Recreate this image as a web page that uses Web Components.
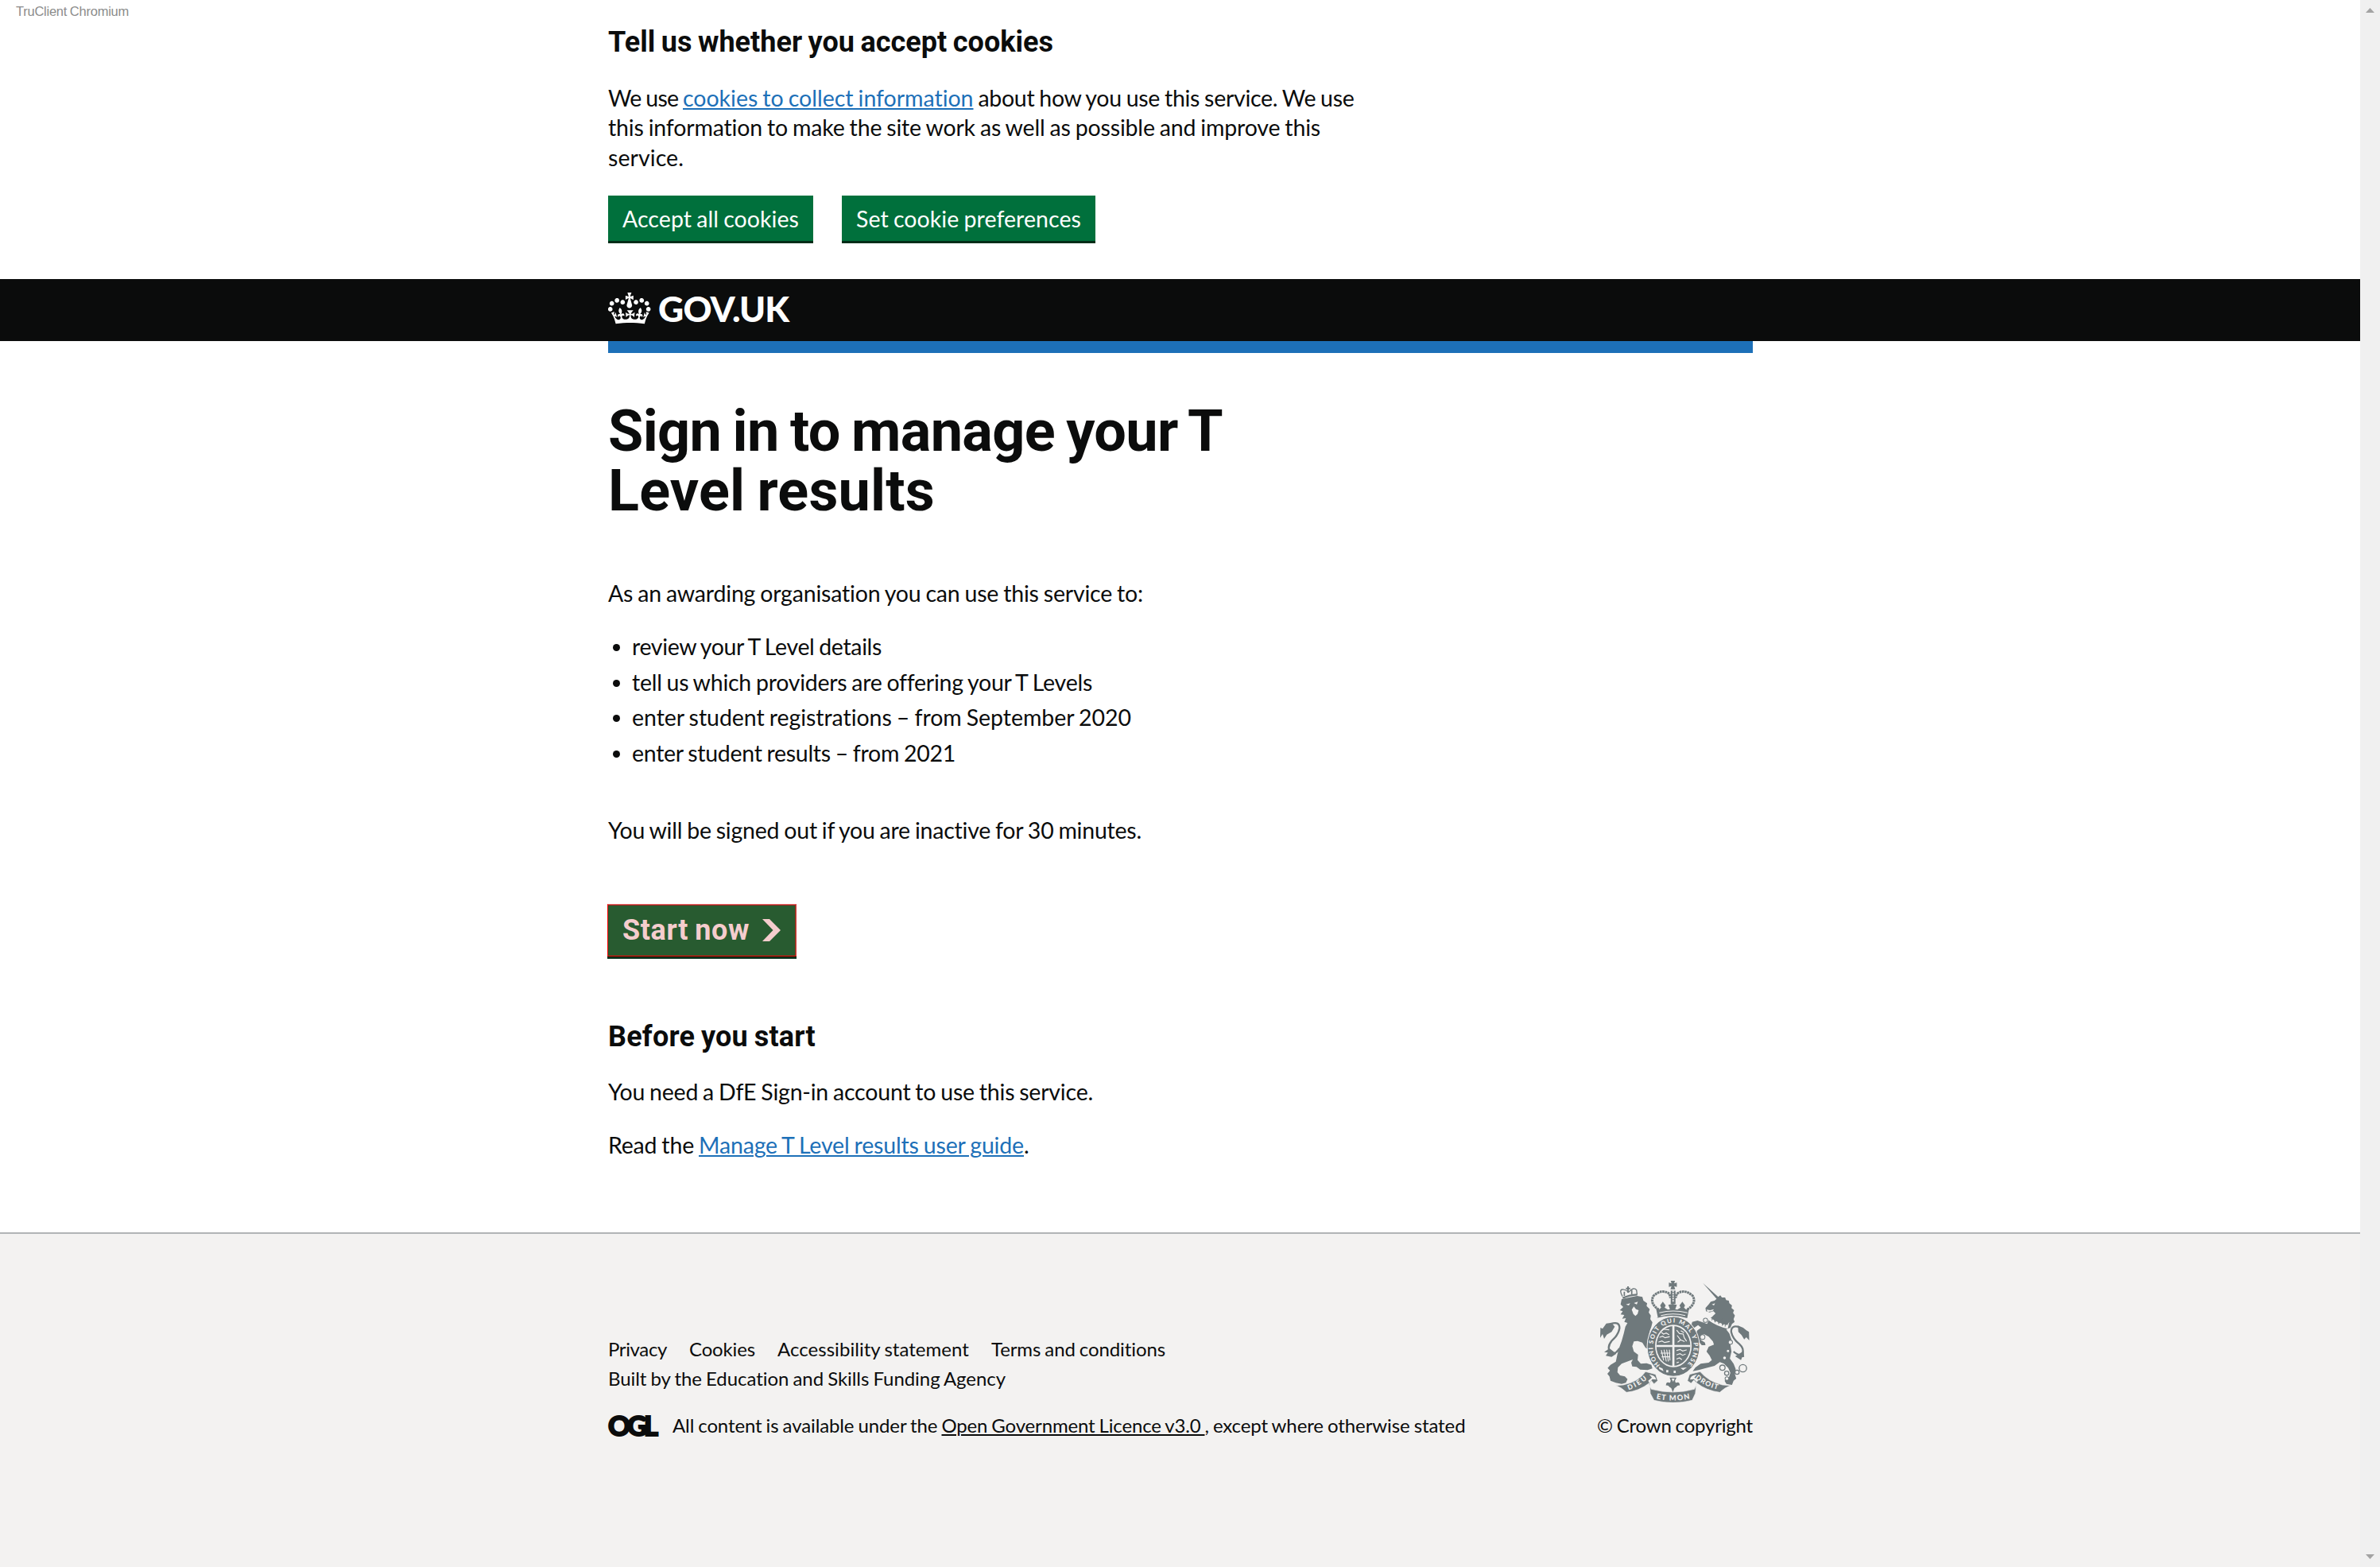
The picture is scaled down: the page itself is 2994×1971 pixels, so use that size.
<!DOCTYPE html>
<html lang="en">
<head>
<meta charset="utf-8">
<title>Manage T Level results</title>
<style>
html, body { margin: 0; padding: 0; background: #fff; }
body { width: 2994px; height: 1971px; overflow: hidden; font-family: Lato, "Open Sans", sans-serif; color: #0b0c0c; }
</style>
</head>
<body>
<service-page></service-page>
<script>
const define = (name, html, extra) => {
  const tpl = document.createElement('template');
  tpl.innerHTML = html;
  customElements.define(name, class extends HTMLElement {
    connectedCallback() {
      if (this.shadowRoot) return;
      this.attachShadow({ mode: 'open' }).append(document.importNode(tpl.content, true));
      if (extra) extra(this);
    }
  });
};

/* A run of text tracked to the measure given in its w attribute */
define('text-run', `<style>:host{white-space:pre;word-spacing:-.04em;font-variant-ligatures:none}</style><slot></slot>`, el => {
  const w = +el.getAttribute('w');
  if (!w) return;
  const natural = el.getBoundingClientRect().width;
  el.style.letterSpacing = ((w - natural) / el.textContent.length).toFixed(3) + 'px';
});

define('body-text', `<style>
:host{display:block;font-size:28.5px;line-height:37.5px}
</style><slot></slot>`);

define('heading-m', `<style>
:host{display:block;font:700 36px/45px Roboto,Lato,sans-serif}
</style><slot></slot>`);

define('text-link', `<style>
:host{color:#1d70b8;text-decoration:underline;text-decoration-thickness:2px;text-underline-offset:2px}
:host([plain]){color:#0b0c0c}
</style><slot></slot>`);

define('action-button', `<style>
:host{display:flex;align-items:center;box-sizing:border-box;height:57px;padding:0 18px;background:#00703c;color:#fff;box-shadow:0 3px 0 #002d18;font-size:28.5px;line-height:30px}
</style><slot></slot>`);

define('start-button', `<style>
:host{display:flex;align-items:center;box-sizing:border-box;width:238px;height:66px;margin-left:-1px;padding:0 19px 0 18px;background:#285b30;color:#f5cdcd;
border:1px solid #f00;border-top-color:#e46a6a;border-right-color:#cf3d3d;box-shadow:inset 0 1px 0 #a3231c,inset -1px 0 0 #8a3a22,0 3px 0 #002d18;font:700 36px/36px Roboto,Lato,sans-serif;justify-content:space-between}
svg{display:block;width:23px;height:28px}
</style><slot></slot><svg viewBox="0 0 23 28"><path d="M0 0h9l14 14-14 14H0l13.5-14z" fill="#f5cdcd"/></svg>`);

define('cookie-banner', `<style>
:host{display:block;box-sizing:border-box;height:351px;padding:31px 0 0 765px}
heading-m{margin-bottom:28.5px}
.row{display:flex;gap:36px;margin-top:29px}
</style>
<heading-m><text-run w="560">Tell us whether you accept cookies</text-run></heading-m>
<body-text><div><text-run w="94">We use </text-run><text-link><text-run w="365.5">cookies to collect information</text-run></text-link><text-run w="479"> about how you use this service. We use</text-run></div>
<div><text-run w="896">this information to make the site work as well as possible and improve this</text-run></div>
<div><text-run w="95">service.</text-run></div></body-text>
<div class="row"><action-button><text-run w="222">Accept all cookies</text-run></action-button><action-button><text-run w="283">Set cookie preferences</text-run></action-button></div>`);

define('crown-logo', `<style>:host{display:block}svg{display:block;width:54px;height:40px;overflow:visible}</style>
<svg viewBox="0 4 36 26.4" preserveAspectRatio="none" fill="#fff" fill-rule="evenodd"><path d="M6.7 12.2c1 .4 2.1-.1 2.5-1s-.1-2.1-1-2.5c-1-.4-2.1.1-2.5 1-.4 1 0 2.1 1 2.5m-4.3 2.5c1 .4 2.1-.1 2.5-1s-.1-2.1-1-2.5c-1-.4-2.1.1-2.5 1-.5 1 0 2.1 1 2.5m-1.3 4.8c1 .4 2.1-.1 2.5-1 .4-1-.1-2.1-1-2.5-1-.4-2.1.1-2.5 1-.4 1 0 2.1 1 2.5m10.4-5.8c1 .4 2.1-.1 2.5-1s-.1-2.1-1-2.5c-1-.4-2.1.1-2.5 1s0 2.1 1 2.5m17.4-1.5c-1 .4-2.1-.1-2.5-1s.1-2.1 1-2.5c1-.4 2.1.1 2.5 1 .5 1 0 2.1-1 2.5m4.3 2.5c-1 .4-2.1-.1-2.5-1s.1-2.1 1-2.5c1-.4 2.1.1 2.5 1 .5 1 0 2.1-1 2.5m1.3 4.8c-1 .4-2.1-.1-2.5-1-.4-1 .1-2.1 1-2.5 1-.4 2.1.1 2.5 1 .4 1 0 2.1-1 2.5m-10.4-5.8c-1 .4-2.1-.1-2.5-1s.1-2.1 1-2.5c1-.4 2.1.1 2.5 1s0 2.1-1 2.5m-5.3-4.9 2.4 1.3V6.5l-2.4.8c-.1-.1-.1-.2-.2-.3s1-3 1-3h-3.4l1 3c-.1.1-.2.2-.2.3-.1.1-2.4-.8-2.4-.8V10l2.4-1.3c.1.1.1.2.2.3l-1.5 5c-.1.2-.1.4-.1.6 0 1.1.8 2 1.9 2.2h.7c1.1-.2 1.9-1.1 1.9-2.1 0-.2 0-.4-.1-.6l-1.4-5c.1-.2.1-.3.2-.4m-1 20.3c4.6 0 8.9.3 12.8.9 1.1-4.6 2.4-7.2 3.8-9.1l-2.6-.9c.3 1.3.3 1.9 0 2.8-.4-.4-.8-1.2-1.1-2.4l-1.2 4.2c.8-.5 1.4-.9 2-.9-1.1 2.5-2.6 3.1-3.5 3-1.1-.2-1.7-1.2-1.5-2.1.3-1.2 1.5-1.5 2.1-.1 1.1-2.3-.8-3-2-2.3 1.9-1.9 2.1-3.5.6-5.6-2.1 1.6-2.1 3.2-1.2 5.5-1.2-1.4-3.2-.6-2.5 1.6.9-1.4 2.1-.5 1.9.8-.2 1.1-1.7 2.1-3.5 1.9-2.7-.2-2.9-2.1-2.9-3.6.7-.1 1.9.5 2.9 1.9l.4-4.3c-1.1 1.1-2.1 1.4-3.2 1.4.4-1.2 2.1-3 2.1-3h-5.4s1.7 1.9 2.1 3c-1.1 0-2.1-.2-3.2-1.4l.4 4.3c1-1.4 2.2-2 2.9-1.9-.1 1.5-.2 3.4-2.9 3.6-1.9.2-3.4-.8-3.5-1.9-.2-1.3 1-2.2 1.9-.8.7-2.3-1.2-3-2.5-1.6.9-2.2.9-3.9-1.2-5.5-1.5 2-1.3 3.7.6 5.6-1.2-.7-3.1 0-2 2.3.6-1.4 1.8-1.1 2.1.1.2.9-.3 1.9-1.5 2.1-.9.2-2.4-.5-3.5-3 .6 0 1.2.3 2 .9l-1.2-4.2c-.3 1.1-.7 1.9-1.1 2.4-.3-.8-.2-1.4 0-2.8l-2.6.9c1.4 1.9 2.7 4.5 3.8 9.1 3.9-.6 8.2-.9 12.8-.9z"/></svg>`);

define('site-header', `<style>
:host{display:block;height:154px}
.bar{display:flex;align-items:center;box-sizing:border-box;height:78px;padding-left:765px;gap:9px;background:#0b0c0c;color:#fff}
crown-logo{margin-bottom:4px}
.name{font:900 44.5px/54px Lato,sans-serif;margin-bottom:4px}
.rule{height:15px;width:1440px;margin-left:765px;background:#1d70b8}
</style>
<div class="bar"><crown-logo></crown-logo><div class="name"><text-run w="164.5">GOV.UK</text-run></div></div><div class="rule"></div>`);

define('bullet-list', `<style>
:host{display:flex;flex-direction:column;gap:7px}
::slotted(body-text){display:flex !important;align-items:center;gap:15.5px}
::slotted(body-text)::before{content:"";width:9px;height:9px;border-radius:50%;background:#0b0c0c;margin:2px 0 0 5.5px}
</style><slot></slot>`);

define('main-content', `<style>
:host{display:block;box-sizing:border-box;height:1045px;padding-left:765px}
h1{margin:0 0 73px;font:700 72px/75px Roboto,Lato,sans-serif}
bullet-list{margin:29.5px 0 59.5px}
start-button{margin-top:73.5px;margin-bottom:79px}
.need{margin:28.5px 0 29.5px}
</style>
<h1><div><text-run w="773">Sign in to manage your T</text-run></div><div><text-run w="411">Level results</text-run></div></h1>
<body-text><text-run w="673">As an awarding organisation you can use this service to:</text-run></body-text>
<bullet-list>
<body-text><text-run w="314">review your T Level details</text-run></body-text>
<body-text><text-run w="579">tell us which providers are offering your T Levels</text-run></body-text>
<body-text><text-run w="628">enter student registrations – from September 2020</text-run></body-text>
<body-text><text-run w="407">enter student results – from 2021</text-run></body-text>
</bullet-list>
<body-text><text-run w="671">You will be signed out if you are inactive for 30 minutes.</text-run></body-text>
<start-button><text-run w="160">Start now</text-run></start-button>
<heading-m><text-run w="261">Before you start</text-run></heading-m>
<body-text class="need"><text-run w="610">You need a DfE Sign-in account to use this service.</text-run></body-text>
<body-text><text-run w="114">Read the </text-run><text-link><text-run w="409">Manage T Level results user guide</text-run></text-link>.</body-text>`);

define('royal-arms', `<style>:host{display:block}svg{display:block;width:187.5px;height:153px}</style>
<svg viewBox="69 63 562 459" preserveAspectRatio="none" fill="#6f797c" stroke="none">
<defs>
<path id="ring" d="M295 381A77 91 0 1 1 395 381"/>
<path id="dieu" d="M176 475Q215 462 250 430"/>
<path id="mon" d="M280 508Q343 521 408 508"/>
<path id="droit" d="M427 430Q462 462 515 474"/>
</defs>
<!-- lion -->
<path d="M150 132L208 120 228 124 232 138 246 148 244 158 256 170 252 182 260 194 258 208 266 220 262 236 256 252 252 270 262 300 270 330 262 326 240 316 228 296 210 290 196 292 190 310 196 330 212 342 210 362 222 376 244 374 262 380 266 394 248 400 220 398 206 388 190 386 186 372 192 360 176 366 150 376 136 390 134 408 144 420 162 424 172 434 166 448 150 452 128 448 108 440 104 424 96 414 106 402 97 392 108 380 128 368 134 340 142 312 150 290 158 262 164 236 172 222 160 218 166 204 152 206 160 192 146 190 154 178 143 174 156 162 146 152z"/>
<path d="M108 226Q142 214 142 242Q138 268 112 290Q94 312 106 332Q124 346 142 318" fill="none" stroke="#6f797c" stroke-width="7"/>
<path d="M112 221L92 224 78 244 70 240 69 278 78 264 84 282 94 266 112 256 124 236zM84 332L98 334 90 346 112 350 130 338 104 318z"/>
<g stroke="#6f797c" fill="none" stroke-width="4"><path d="M153 122Q140 98 152 96T176 106Q196 84 206 98L208 114"/><path d="M174 84v24M166 92h16" stroke-width="6"/><path d="M154 128Q180 116 209 115" stroke-width="7"/><path d="M160 104v16M188 98v16" stroke-width="5"/></g>
<path d="M166 152l16-4-5 8zM196 147l15-5-4 10zM188 172l8-12 8 10 10 4-4 14-8 8-8-8z" fill="#f3f2f1"/>
<!-- unicorn -->
<path d="M456 71L514 124 522 118 528 126 540 126 544 136 554 138 556 148 566 156 564 166 574 174 570 184 577 194 572 208 576 218 566 226 560 240 544 246 556 262 566 290 560 304 564 330 558 356 572 376 580 396 576 412 582 432 572 440 566 456 545 452 538 440 554 428 560 410 552 392 536 376 520 370 500 384 468 392 440 400 418 404 428 390 448 376 478 372 490 362 482 346 470 330 478 312 498 304 494 292 478 274 460 264 446 274 448 286 464 296 466 306 452 306 440 292 424 286 426 266 436 250 450 240 438 230 424 240 413 230 416 218 436 213 456 220 472 226 480 208 492 198 504 186 496 178 482 182 468 178 466 166 478 152 486 142 500 138 508 131z"/>
<path d="M594 238Q562 228 563 256Q568 282 594 302Q612 318 606 338Q594 350 572 330" fill="none" stroke="#6f797c" stroke-width="7"/>
<path d="M588 232L608 240 620 250 630 256 631 288 620 276 612 284 602 268 590 256zM578 348L600 362 604 352 612 350 610 328z"/>
<path d="M490 152l12-4-4 8zM470 172l14 2 14-4-6 8-18 2z" fill="#f3f2f1"/>
<path d="M482 200Q510 222 548 230L556 218 550 244Q508 234 478 212z" fill="#f3f2f1"/>
<path d="M490 212l6-14 6 20 10-14 4 20 12-14 2 20 12-14-2 20" stroke="#6f797c" fill="none" stroke-width="3"/>
<g fill="#f3f2f1" stroke="#6f797c" stroke-width="3"><circle cx="466" cy="212" r="8"/><circle cx="455" cy="275" r="9"/><circle cx="560" cy="295" r="8"/><circle cx="551" cy="328" r="6"/><circle cx="538" cy="354" r="7"/><circle cx="547" cy="432" r="7"/></g>
<g fill="none" stroke="#6f797c" stroke-width="4"><circle cx="607" cy="393" r="14"/><circle cx="585" cy="408" r="8"/><circle cx="546" cy="412" r="8"/><circle cx="530" cy="391" r="10"/></g>
<!-- ribbon -->
<path d="M128 458L156 456Q214 444 240 406L278 416 286 440 272 452 262 440 252 452 262 472Q344 494 424 472L434 450 422 438 412 450 398 440 406 416 446 406Q478 444 530 456L562 458Q540 464 520 484Q470 478 432 448L428 488 416 514Q344 532 272 514L258 488 256 448Q214 480 168 484 148 464 128 458z" stroke="#f3f2f1" stroke-width="2"/>
<path d="M254 416Q278 420 280 436L266 434 254 448 250 440 264 428zM434 416Q408 420 408 436L422 434 434 446 438 438 424 428z" fill="#f3f2f1"/>
<path d="M331 428h26l-6 12q2 8 4 8 14-6 14 10-8-2-14 6l-6 4-6 16-6-16-6-4q-6-8-14-6 0-16 14-10 2 0 4-8z"/>
<path d="M338 432h12l-6 12z" fill="#f3f2f1"/>
<!-- garter and shield -->
<ellipse cx="345" cy="311" rx="99" ry="113" stroke="#f3f2f1" stroke-width="3"/>
<ellipse cx="345" cy="309" rx="69" ry="80" fill="#f3f2f1"/>
<ellipse cx="345" cy="309" rx="64" ry="75"/>
<path d="M341 232h8v154h-8zM281 305h128v8h-128z" fill="#f3f2f1"/>
<g fill="none" stroke="#f3f2f1" stroke-width="3.5" stroke-linecap="round">
<path d="M300 258l8 6 10-4 10 6M294 276l10-4 10 6 16-4M290 294l12-4 10 6 18-4M310 246l18 2"/>
<path d="M358 250l10 12 14 2 4 14 8 12M360 270l12 16 14 6M362 294l8-6M374 252l10 6"/>
<path d="M300 326l8 36M310 324l8 42M320 324l6 42M330 324l2 38M298 336h34M302 350h28"/>
<path d="M358 326l12-4 10 6 14-4M358 342l12-4 10 6 10-4M358 358l10-4 8 6M358 372l6-2"/></g>
<path d="M290 388l14 6 4 10-16-8zM318 400h8v9h-8zM346 402h8v9h-8zM372 392l24-2-14 10z" fill="#f3f2f1"/>
<!-- crown -->
<path d="M335 63h16l-3 10 10-3v16l-10-3 4 12h-18l4-12-10 3V70l10 3z"/>
<g fill="none" stroke="#6f797c">
<path d="M290 172Q254 148 270 120Q300 92 330 112L334 128" stroke-width="9" stroke-dasharray="8 2"/>
<path d="M397 172Q434 148 418 120Q388 92 358 112L353 128" stroke-width="9" stroke-dasharray="8 2"/>
<path d="M344 100v50" stroke-width="18"/><path d="M344 100v44" stroke="#f3f2f1" stroke-width="5" stroke-dasharray="6 3"/></g>
<path d="M287 204l-8-40 12 8 8-8-4-8 10-14 11 14-4 8 12 8 8-2-6-16 16-4 16 4-6 16 8 2 12-8-4-8 11-14 10 14-4 8 8 8 12-8-8 40q-58-18-116 0z"/>
<path d="M292 184q52-14 106 0M298 194q46-12 92 0" fill="none" stroke="#f3f2f1" stroke-width="3"/>
<g fill="#f3f2f1" font-family="Lato, sans-serif" font-weight="900">
<text font-size="23"><textPath href="#ring" textLength="412">HONI SOIT QUI MAL Y PENSE</textPath></text>
<text font-size="26"><textPath href="#dieu" textLength="82">DIEU</textPath></text>
<text font-size="28"><textPath href="#mon" textLength="128">ET MON</textPath></text>
<text font-size="26"><textPath href="#droit" textLength="96">DROIT</textPath></text></g>
</svg>`);

define('site-footer', `<style>
:host{display:flex;justify-content:space-between;align-items:flex-end;box-sizing:border-box;height:421px;padding:0 764px 163px 765px;border-top:2px solid #b1b4b6;background:#f3f2f1;font-size:24px;line-height:30px}
.links{display:flex;gap:28px;line-height:37px}
.built{line-height:37px;margin-bottom:26px}
.licence{display:flex;align-items:center;height:30px}
.ogl{width:81px;height:30px;font:900 34.5px/30px Lato,sans-serif;-webkit-text-stroke:2px #0b0c0c}
.ogl text-run{display:inline-block;margin-top:-2px}
.arms{display:flex;flex-direction:column;align-items:center;gap:14px}
</style>
<div><div class="links"><text-run w="74">Privacy</text-run><text-run w="83">Cookies</text-run><text-run w="241">Accessibility statement</text-run><text-run w="219">Terms and conditions</text-run></div>
<div class="built"><text-run w="500">Built by the Education and Skills Funding Agency</text-run></div>
<div class="licence"><div class="ogl"><text-run w="59">OGL</text-run></div><span><text-run w="338.5">All content is available under the </text-run><text-link plain><text-run w="331">Open Government Licence v3.0 </text-run></text-link><text-run w="328">, except where otherwise stated</text-run></span></div></div>
<div class="arms"><royal-arms></royal-arms><text-run w="196">© Crown copyright</text-run></div>`);

define('scroll-bar', `<style>
:host{display:flex;flex-direction:column;justify-content:space-between;align-items:center;box-sizing:border-box;width:25px;height:1971px;padding:10px 0;background:#f0f0f0}
svg{display:block;width:11px;height:6px}
</style><svg viewBox="0 0 11 6"><path d="M0 6L5.5 0 11 6z" fill="#a3a3a3"/></svg><svg viewBox="0 0 11 6"><path d="M0 0h11L5.5 6z" fill="#a3a3a3"/></svg>`);

define('client-label', `<style>
:host{position:absolute;left:20px;top:4px;font:16.5px/20px "Liberation Sans",Arial,sans-serif;color:#8c8c8c}
</style><text-run w="142">TruClient Chromium</text-run>`);

define('service-page', `<style>
:host{display:flex;width:2994px;height:1971px;position:relative}
.page{flex:1}
</style><div class="page"><cookie-banner></cookie-banner><site-header></site-header><main-content></main-content><site-footer></site-footer></div><scroll-bar></scroll-bar><client-label></client-label>`);
</script>
</body>
</html>
